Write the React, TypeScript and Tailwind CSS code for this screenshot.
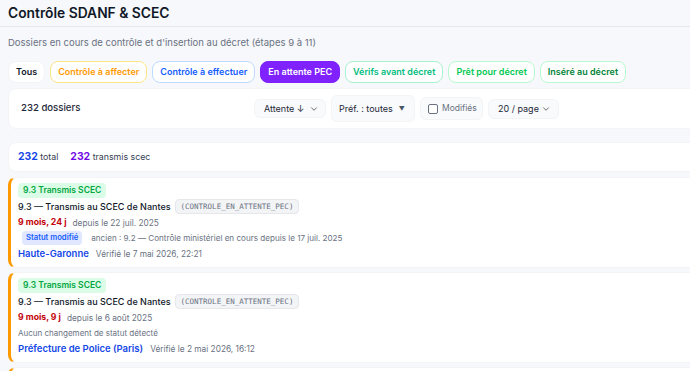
import { ChevronDown } from "lucide-react"

const chips = [
  { label: "Tous", cls: "bg-white border-gray-100 text-gray-900" },
  { label: "Contrôle à affecter", cls: "bg-white border-amber-200 text-amber-500" },
  { label: "Contrôle à effectuer", cls: "bg-white border-blue-200 text-blue-600" },
  { label: "En attente PEC", cls: "bg-violet-600 border-violet-600 text-white" },
  { label: "Vérifs avant décret", cls: "bg-white border-emerald-200 text-emerald-500" },
  { label: "Prêt pour décret", cls: "bg-white border-green-200 text-green-500" },
  { label: "Inséré au décret", cls: "bg-white border-green-200 text-green-700" },
]

type Dossier = {
  duree: string
  depuis: string
  ancien?: string
  pref: string
  verif: string
}

const dossiers: Dossier[] = [
  {
    duree: "9 mois, 24 j",
    depuis: "depuis le 22 juil. 2025",
    ancien: "ancien : 9.2 — Contrôle ministériel en cours depuis le 17 juil. 2025",
    pref: "Haute-Garonne",
    verif: "Vérifié le 7 mai 2026, 22:21",
  },
  {
    duree: "9 mois, 9 j",
    depuis: "depuis le 6 août 2025",
    pref: "Préfecture de Police (Paris)",
    verif: "Vérifié le 2 mai 2026, 16:12",
  },
  {
    duree: "9 mois, 2 j",
    depuis: "depuis le 13 août 2025",
    pref: "Rhône",
    verif: "Vérifié le 2 mai 2026, 16:10",
  },
]

function Card({ d }: { d: Dossier }) {
  return (
    <article className="bg-white rounded-lg border border-gray-100 border-l-[3px] border-l-amber-500 pl-[7px] pt-[5px] pb-[5px] flex flex-col whitespace-nowrap">
      <div className="flex">
        <span className="bg-green-100 text-green-600 text-[8.5px] font-semibold rounded px-[5px] h-[15px] leading-[15px]">9.3 Transmis SCEC</span>
      </div>
      <div className="flex items-center gap-[4px] h-[15px] mt-[1px]">
        <span className="text-[9px] font-medium text-gray-900">9.3 — Transmis au SCEC de Nantes</span>
        <span className="bg-gray-100 border border-gray-200 rounded text-[7.5px] text-gray-500 px-[5px] h-[15px] leading-[13px] font-['DejaVu_Sans_Mono',monospace]">(CONTROLE_EN_ATTENTE_PEC)</span>
      </div>
      <div className="flex items-center gap-[6px] h-[14px] mt-[2px]">
        <span className="text-[8.7px] font-bold text-red-700">{d.duree}</span>
        <span className="text-[8.3px] text-gray-500">{d.depuis}</span>
      </div>
      {d.ancien ? (
        <div className="flex items-center gap-[9px] h-[14px] mt-[1px] pl-[4px]">
          <span className="bg-indigo-100 text-blue-600 text-[7.7px] font-semibold rounded px-[4px] h-[14px] leading-[14px]">Statut modifié</span>
          <span className="text-[8.1px] text-gray-500">{d.ancien}</span>
        </div>
      ) : (
        <div className="h-[14px] mt-[1px] text-[8px] leading-[14px] text-gray-500">Aucun changement de statut détecté</div>
      )}
      <div className="flex items-center gap-[7px] h-[15px] mt-[2px]">
        <span className="text-[9.5px] font-semibold text-blue-700">{d.pref}</span>
        <span className="text-[8.3px] text-gray-500">{d.verif}</span>
      </div>
    </article>
  )
}

export default function App() {
  return (
    <div className="w-full h-[371px] overflow-hidden bg-[#f7f8fb] font-['Inter',sans-serif] whitespace-nowrap">
      <div className="w-[900px]">
        <h1 className="px-[8px] h-[27px] pt-[3px] text-[13.8px] font-semibold text-gray-900 border-b border-gray-200">Contrôle SDANF &amp; SCEC</h1>
        <p className="px-[8px] pt-[9px] h-[34px] text-[9.5px] text-gray-500">Dossiers en cours de contrôle et d'insertion au décret (étapes 9 à 11)</p>
        <div className="flex gap-[5px] px-[8px]">
          {chips.map(c => (
            <span key={c.label} className={`border rounded-[8px] h-[22px] px-[7px] flex items-center text-[9px] font-semibold ${c.cls}`}>{c.label}</span>
          ))}
        </div>
        <div className="mx-[8px] mt-[5px] h-[41px] bg-white border border-gray-100 rounded-lg flex items-center pl-[12px]">
          <span className="w-[233px] text-[9.6px] font-medium text-gray-800">232 dossiers</span>
          <div className="flex items-center gap-[5px]">
            <div className="h-[19px] w-[72px] bg-gray-50 border border-gray-100 rounded-md flex items-center justify-between pl-[9px] pr-[6px] text-[9px] text-gray-800">
              <span>Attente ↓</span>
              <ChevronDown size={10} strokeWidth={1.6} />
            </div>
            <div className="h-[27px] w-[84px] bg-gray-50 border border-gray-100 rounded-md flex items-center gap-[6px] pl-[7px] text-[9px] text-gray-800">
              <span>Préf. : toutes</span>
              <span className="text-[6px] text-gray-600">▼</span>
            </div>
            <div className="h-[23px] w-[63px] bg-gray-50 border border-gray-100 rounded-md flex items-center gap-[4px] pl-[7px] text-[8.5px] text-gray-500">
              <span className="w-[10px] h-[10px] border border-gray-500 rounded-[2px] bg-white"></span>
              <span>Modifiés</span>
            </div>
            <div className="h-[20px] w-[71px] bg-gray-50 border border-gray-100 rounded-md flex items-center justify-between pl-[9px] pr-[7px] text-[9px] text-gray-800">
              <span>20 / page</span>
              <ChevronDown size={10} strokeWidth={1.6} />
            </div>
          </div>
        </div>
        <div className="mx-[8px] mt-[13px] h-[30px] bg-white border border-gray-100 rounded-lg flex items-center gap-[12px] pl-[9px] text-[8.8px] text-gray-700">
          <span><b className="text-[10.4px] font-bold text-blue-700">232</b> total</span>
          <span><b className="text-[10.4px] font-bold text-violet-700">232</b> transmis scec</span>
        </div>
        <div className="mx-[8px] mt-[5px] flex flex-col gap-[4px]">
          {dossiers.map((d, i) => (
            <Card key={i} d={d} />
          ))}
        </div>
      </div>
    </div>
  )
}
